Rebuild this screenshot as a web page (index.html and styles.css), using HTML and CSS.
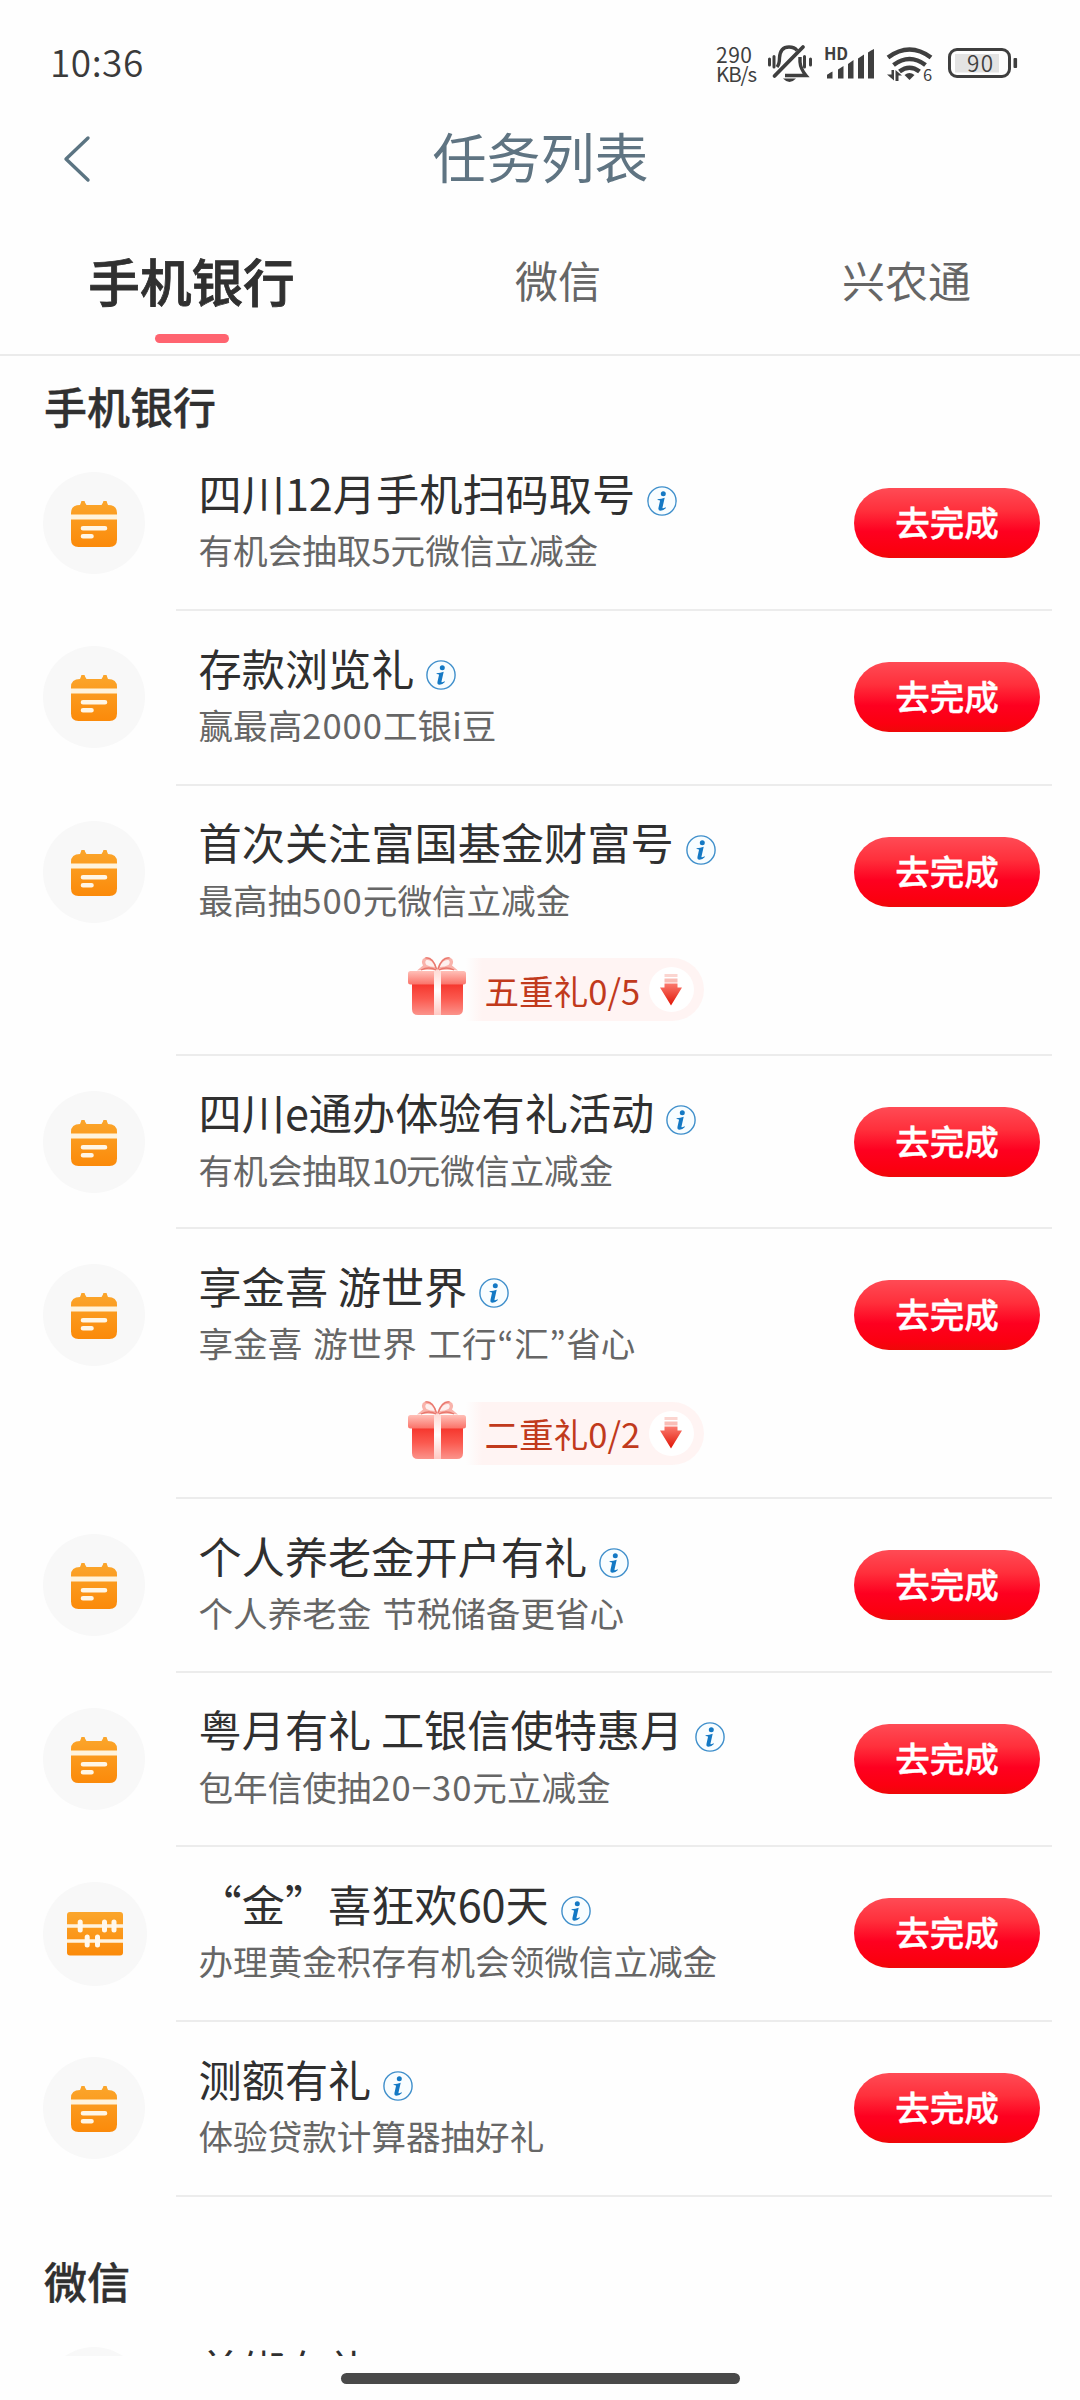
FILE: index.html
```html
<!DOCTYPE html>
<html lang="zh-CN">
<head>
<meta charset="utf-8">
<title>任务列表</title>
<link rel="stylesheet" href="styles.css">
</head>
<body>
<svg class="sprite" width="0" height="0" aria-hidden="true">
  <defs>
    <linearGradient id="g-orange" x1="0" y1="0" x2="0" y2="1"><stop offset="0" stop-color="#fba62c"/><stop offset="1" stop-color="#fb8a0a"/></linearGradient>
    <linearGradient id="g-lid" x1="0" y1="0" x2="0" y2="1"><stop offset="0" stop-color="#ffc0b8"/><stop offset="1" stop-color="#fa7268"/></linearGradient>
    <linearGradient id="g-box" x1="0" y1="0" x2="0" y2="1"><stop offset="0" stop-color="#f5332a"/><stop offset=".5" stop-color="#fb5a50"/><stop offset="1" stop-color="#fb938b"/></linearGradient>
    <linearGradient id="g-ribbon" x1="0" y1="0" x2="0" y2="1"><stop offset="0" stop-color="#ffdcd6"/><stop offset=".45" stop-color="#fff"/><stop offset="1" stop-color="#ffc9c3"/></linearGradient>
    <linearGradient id="g-arrow" x1="0" y1="0" x2="0" y2="1"><stop offset="0" stop-color="#fb7a6e"/><stop offset="1" stop-color="#e01405"/></linearGradient>
    <symbol id="calendar" viewBox="0 0 46 46">
      <path fill="url(#g-orange)" d="M10 1.500a2 2 0 0 1 4 0L15.500 4H30.500L32 1.500a2 2 0 0 1 4 0L37 4Q46 4 46 12V38.500Q46 46 38.500 46H7.500Q0 46 0 38.500V12Q0 4 9 4Z"/>
      <path fill="#fff3dc" d="M0 13.600H46V18.600H0Z"/>
      <path stroke="#fff6e6" stroke-width="4.600" stroke-linecap="round" d="M12 27.200H34M12 35.300H20.500"/>
    </symbol>
    <symbol id="abacus" viewBox="0 0 56 44">
      <rect width="56" height="43.500" rx="3" fill="url(#g-orange)"/>
      <path stroke="#fff3e0" stroke-width="3.600" d="M0 14H56M0 29H56"/>
      <path stroke="#fff8ee" stroke-width="5" stroke-linecap="round" d="M13.200 10V18M37.500 10V18M47 10V18M20.200 25V33M30.500 25V33"/>
    </symbol>
    <symbol id="info" viewBox="0 0 30 30">
      <circle cx="15" cy="15" r="14.100" fill="#f8fdff" stroke="#3f8fcb" stroke-width="1.400"/>
      <circle cx="16.300" cy="7.700" r="2.500" fill="#1479c4"/>
      <path fill="#1479c4" d="M10.600 13.200Q14.500 12.900 17.700 11.700L15.500 21.500Q15.100 23.300 18.600 21.300L18.900 22Q16.500 24.700 13.500 24.700 10.900 24.600 11.500 21.800L13 15Q13.200 14 10.600 14Z"/>
    </symbol>
    <symbol id="gift" viewBox="0 0 58 60">
      <path fill="#f9b3ab" d="M29 13Q25 -1 17 1.500 12 4 15 9.500L9 14.500Q20 13 29 14.500Q39 13 50 14.500L44 9.500Q47 4 42 1.500 34 -1 29 13Z"/>
      <path fill="#fef0ee" d="M27 11Q24 3 18.500 4 16 6 18.500 9 22 11 27 11M31.500 11Q35 3 40.500 4 43 6 40.500 9 37 11 31.500 11"/>
      <path fill="none" stroke="#e8776d" stroke-width="1.300" d="M28.500 13Q25 1 17.500 2M30 13Q34 1 41.500 2M13 14Q21 10 28 14M46 14Q38 10 31 14"/>
      <path fill="url(#g-box)" d="M4 27H55V53Q55 59 49 59H10Q4 59 4 53Z"/>
      <rect y="15" width="58" height="13.500" rx="2.500" fill="url(#g-lid)"/>
      <path fill="url(#g-ribbon)" d="M26 15H33V59H26Z"/>
    </symbol>
    <symbol id="down" viewBox="0 0 24 32">
      <path fill="#fbd5d0" d="M5.500 0H18.500V3H5.500Z"/><path fill="#f9bdb6" d="M5.500 4.500H18.500V8.500H5.500Z"/>
      <path fill="url(#g-arrow)" d="M5.500 9.500H18.500V13.500H23L12 31.500 1 13.500H5.500Z"/>
    </symbol>
  </defs>
</svg>
<div class="screen">
  <header class="status-bar">
    <time class="clock">10:36</time>
    <svg class="status-icons" viewBox="716 40 304 48" width="304" height="48">
      <g class="status-text">
        <text x="716" y="63" font-size="21" textLength="36">290</text>
        <text x="716" y="81.500" font-size="20.500" textLength="41">KB/s</text>
        <text x="824" y="59.500" font-size="16.500" font-weight="700" textLength="24">HD</text>
        <text x="923" y="80.500" font-size="16.500">6</text>
      </g>
      <g fill="none" stroke="#3f3f3f">
        <path stroke-width="3.400" d="M777 67Q779.500 64 779.500 58Q780 47 789 47Q794.500 47 797 50.500M800 57V62Q800.500 69 806 75.500H785"/>
        <path stroke-width="3.800" stroke-linecap="round" d="M774.500 76L803 47"/>
        <path stroke-width="3" stroke-linecap="round" d="M769.500 59V65M774 56.500V67M804.500 56.500V67M810.500 59V65"/>
      </g>
      <g fill="#3f3f3f">
        <path d="M783 78.500H796Q789.500 85.500 783 78.500"/>
        <path d="M827 78.500V75Q827 74.500 832.500 71.500V78.500ZM838 78.500V69.500L843.500 66V78.500ZM848 78.500V64L853.500 60V78.500ZM858 78.500V58.500L864 54.500V78.500ZM868 78.500V52.500Q871 50 874 49V78.500Z"/>
        <path d="M904.500 75Q909.500 71 914.500 75L909.500 80Z"/>
        <path d="M891.500 70H894V80.500L887 74.500H891.500ZM895.500 81V70L902 75.500H898.500V81Z"/>
        <rect x="1013.500" y="58" width="3.600" height="10" rx="1"/>
      </g>
      <g fill="none" stroke="#3f3f3f" stroke-width="4.600">
        <path d="M888 57.500Q909.500 41.500 931 57.500M893.500 65Q909.500 53 925.500 65M899.500 71.500Q909.500 64 919.500 71.500"/>
        <rect x="949.500" y="49.500" width="60" height="27" rx="7.500" stroke-width="3"/>
      </g>
      <rect x="955" y="54" width="44" height="18.500" fill="#e3e3e3"/>
      <text class="battery" x="967" y="72" font-size="22.500" textLength="26">90</text>
    </svg>
  </header>
  <nav class="nav-bar">
    <svg class="back" viewBox="0 0 28 48" width="28" height="48"><path d="M25 3L3 24 25 45"/></svg>
    <h1 class="page-title">任务列表</h1>
  </nav>
  <div class="tabs">
    <div class="tab tab-active">手机银行</div>
    <div class="tab">微信</div>
    <div class="tab">兴农通</div>
  </div>
  <main class="content">
    <h2 class="section-title">手机银行</h2>
    <ul class="task-list">
      <li class="task">
        <div class="task-icon"><svg class="calendar"><use href="#calendar"/></svg></div>
        <div class="task-body">
          <div class="task-main">
            <div class="task-text"><div class="task-title">四川12月手机扫码取号<svg class="info"><use href="#info"/></svg></div><p class="task-desc">有机会抽取5元微信立减金</p></div>
            <button class="go">去完成</button>
          </div>
        </div>
      </li>
      <li class="task">
        <div class="task-icon"><svg class="calendar"><use href="#calendar"/></svg></div>
        <div class="task-body">
          <div class="task-main">
            <div class="task-text"><div class="task-title">存款浏览礼<svg class="info"><use href="#info"/></svg></div><p class="task-desc">赢最高<span class="num">2000</span>工银i豆</p></div>
            <button class="go">去完成</button>
          </div>
        </div>
      </li>
      <li class="task task-tall">
        <div class="task-icon"><svg class="calendar"><use href="#calendar"/></svg></div>
        <div class="task-body">
          <div class="task-main">
            <div class="task-text"><div class="task-title">首次关注富国基金财富号<svg class="info"><use href="#info"/></svg></div><p class="task-desc">最高抽<span class="num">500</span>元微信立减金</p></div>
            <button class="go">去完成</button>
          </div>
          <div class="bonus"><svg class="gift"><use href="#gift"/></svg><div class="bonus-pill"><span>五重礼0/5</span><i class="bonus-arrow"><svg class="down"><use href="#down"/></svg></i></div></div>
        </div>
      </li>
      <li class="task task-short">
        <div class="task-icon"><svg class="calendar"><use href="#calendar"/></svg></div>
        <div class="task-body">
          <div class="task-main">
            <div class="task-text"><div class="task-title">四川e通办体验有礼活动<svg class="info"><use href="#info"/></svg></div><p class="task-desc">有机会抽取<span class="num-tight">10</span>元微信立减金</p></div>
            <button class="go">去完成</button>
          </div>
        </div>
      </li>
      <li class="task task-tall">
        <div class="task-icon"><svg class="calendar"><use href="#calendar"/></svg></div>
        <div class="task-body">
          <div class="task-main">
            <div class="task-text"><div class="task-title">享金喜 游世界<svg class="info"><use href="#info"/></svg></div><p class="task-desc">享金喜 游世界 工行<span class="quote">“</span>汇<span class="quote">”</span>省心</p></div>
            <button class="go">去完成</button>
          </div>
          <div class="bonus"><svg class="gift"><use href="#gift"/></svg><div class="bonus-pill"><span>二重礼0/2</span><i class="bonus-arrow"><svg class="down"><use href="#down"/></svg></i></div></div>
        </div>
      </li>
      <li class="task task-short">
        <div class="task-icon"><svg class="calendar"><use href="#calendar"/></svg></div>
        <div class="task-body">
          <div class="task-main">
            <div class="task-text"><div class="task-title">个人养老金开户有礼<svg class="info"><use href="#info"/></svg></div><p class="task-desc">个人养老金 节税储备更省心</p></div>
            <button class="go">去完成</button>
          </div>
        </div>
      </li>
      <li class="task">
        <div class="task-icon"><svg class="calendar"><use href="#calendar"/></svg></div>
        <div class="task-body">
          <div class="task-main">
            <div class="task-text"><div class="task-title">粤月有礼 工银信使特惠月<svg class="info"><use href="#info"/></svg></div><p class="task-desc">包年信使抽<span class="num">20−30</span>元立减金</p></div>
            <button class="go">去完成</button>
          </div>
        </div>
      </li>
      <li class="task">
        <div class="task-icon task-icon-wide"><svg class="abacus"><use href="#abacus"/></svg></div>
        <div class="task-body">
          <div class="task-main">
            <div class="task-text"><div class="task-title">“金”喜狂欢60天<svg class="info"><use href="#info"/></svg></div><p class="task-desc">办理黄金积存有机会领微信立减金</p></div>
            <button class="go">去完成</button>
          </div>
        </div>
      </li>
      <li class="task">
        <div class="task-icon"><svg class="calendar"><use href="#calendar"/></svg></div>
        <div class="task-body">
          <div class="task-main">
            <div class="task-text"><div class="task-title">测额有礼<svg class="info"><use href="#info"/></svg></div><p class="task-desc">体验贷款计算器抽好礼</p></div>
            <button class="go">去完成</button>
          </div>
        </div>
      </li>
    </ul>
    <h2 class="section-title section-next">微信</h2>
    <ul class="task-list">
      <li class="task">
        <div class="task-icon"></div>
        <div class="task-body">
          <div class="task-main">
            <div class="task-text"><div class="task-title">首绑有礼</div></div>
          </div>
        </div>
      </li>
    </ul>
  </main>
  <footer class="home-area"><div class="home-indicator"></div></footer>
</div>
</body>
</html>
```
FILE: styles.css
```css
* { box-sizing: border-box; margin: 0; padding: 0; }
body {
  background: #fefefe;
  color: #303030;
  font-family: "Noto Sans CJK SC", sans-serif;
  font-weight: 400;
}
.sprite { display: block; }
.screen { width: 1080px; height: 2400px; display: flex; flex-direction: column; overflow: hidden; }

.status-bar { height: 104px; flex: none; display: flex; justify-content: space-between; align-items: flex-start; padding: 40px 60px 0 50px; }
.clock { font-size: 37px; line-height: 48px; font-weight: 350; color: #3a3a3a; letter-spacing: .5px; margin-top: -3px; }
.status-text, .battery { fill: #3f3f3f; font-family: "Noto Sans CJK SC", sans-serif; }
.battery { font-weight: 350; }

.nav-bar { height: 108px; flex: none; display: grid; grid-template-columns: 200px 1fr 200px; align-items: center; }
.back { margin-left: 63px; margin-top: 1px; fill: none; stroke: #5b7482; stroke-width: 3.4; stroke-linecap: round; stroke-linejoin: round; }
.page-title { font-size: 54px; line-height: 80px; font-weight: 400; color: #5f7482; text-align: center; margin-top: -4px; padding-left: 1px; }

.tabs { height: 144px; flex: none; display: grid; grid-template-columns: 383px 350px 347px; border-bottom: 2px solid #ebebeb; }
.tab { display: flex; flex-direction: column; align-items: center; font-size: 43px; line-height: 80px; padding-top: 27px; color: #666; }
.tab-active { padding-top: 28px; font-size: 51.6px; font-weight: 500; color: #303030; -webkit-text-stroke: .8px #303030; }
.tab-active::after { content: ""; width: 74px; height: 9px; border-radius: 5px; background: #ff6470; margin-top: 14px; }

.content { flex: 1; min-height: 0; overflow: hidden; }
.section-title { font-size: 43px; line-height: 60px; font-weight: 500; padding: 18.600px 0 2px 44px; -webkit-text-stroke: .4px #303030; }
.section-next { padding-top: 53.400px; }
.task-list { list-style: none; }
.task { display: flex; height: 174.700px; padding-right: 28px; }
.task-short { height: 173.700px; }
.task-tall { height: 269.700px; }
.task-icon { width: 102px; height: 102px; margin: 35px 31px 0 42.500px; flex: none; border-radius: 50%; background: #f8f8f8; display: flex; align-items: center; justify-content: center; }
.task-icon-wide { width: 104px; height: 104px; margin-right: 29px; }
.calendar { width: 46px; height: 46px; margin-top: 2px; }
.abacus { width: 56px; height: 44px; }
.task-body { flex: 1; border-bottom: 2px solid #ececec; }
.task-main { height: 172px; display: flex; justify-content: space-between; align-items: center; padding: 0 12px 0 23px; }
.task-text { align-self: flex-start; padding-top: 27.500px; white-space: nowrap; }
.task-title { display: flex; align-items: center; font-size: 43.2px; line-height: 57px; }
.info { width: 30px; height: 30px; margin: 16px 0 0 12px; }
.task-desc { font-size: 34.6px; line-height: 50px; margin-top: 3.400px; color: #666; word-spacing: 3px; }
.num { letter-spacing: 1px; }
.num-tight { letter-spacing: -2px; }
.quote { display: inline-block; width: 17.500px; text-align: center; font-family: "Noto Sans CJK KR", sans-serif; }
.go { width: 186px; height: 70px; border: 0; border-radius: 35px; font-family: inherit; font-size: 34.6px; line-height: 66px; padding-bottom: 4px; font-weight: 500; -webkit-text-stroke: .4px #fff; color: #fff; background: linear-gradient(#ff4b55, #ff303c 32%, #fe0020 62%, #fb0010 88%, #ee0808); }

.bonus { display: flex; padding-left: 232px; height: 63px; margin-top: .5px; }
.gift { width: 58px; height: 60px; margin-top: -2px; flex: none; }
.bonus-pill { width: 238px; height: 63px; border-radius: 0 32px 32px 0; background: linear-gradient(90deg, #fff4f300, #fff4f3 16px); display: flex; align-items: center; justify-content: space-between; padding: 0 10px 0 19px; color: #c13a1c; font-size: 34.6px; line-height: 60px; }
.bonus-arrow { width: 45px; height: 45px; border-radius: 50%; background: #fff; display: flex; align-items: center; justify-content: center; }
.down { width: 24px; height: 32px; }

.home-area { height: 44px; flex: none; padding-top: 17px; background: #fefefe; }
.home-indicator { width: 399px; height: 11px; border-radius: 6px; background: #494949; margin: 0 auto; }
```
